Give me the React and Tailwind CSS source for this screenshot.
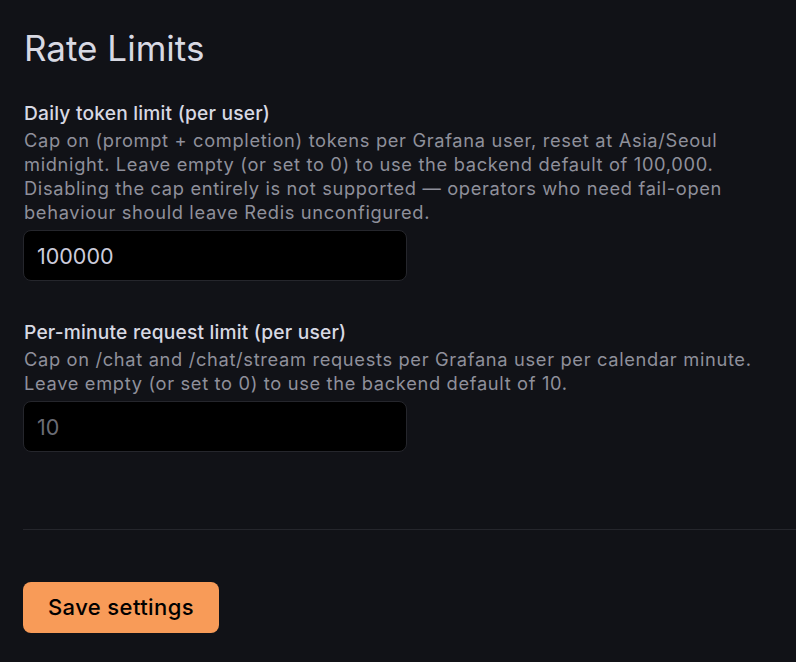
import { useState } from 'react';

function Field({ label, description, value, placeholder, onChange }) {
	return (
		<div className="flex flex-col">
			<label className="pl-px text-[19.2px] leading-[30px] tracking-[0.2px] font-medium text-[#d8d9e3]">{label}</label>
			<p className="pl-px text-[18.3px] leading-[24px] tracking-[0.66px] text-[#8f909b]">{description}</p>
			<input
				type="text"
				value={value}
				placeholder={placeholder}
				onChange={(e) => onChange(e.target.value)}
				className="mt-[6px] w-[384px] h-[51px] rounded-[8px] bg-black border border-[#25262c] px-[13px] text-[21.5px] text-[#ccccdc] placeholder:text-[#6b6c75] outline-none"
			/>
		</div>
	);
}

export default function App() {
	const [dailyLimit, setDailyLimit] = useState('100000');
	const [minuteLimit, setMinuteLimit] = useState('');

	return (
		<div className="min-h-[662px] bg-[#111217] pl-[23px] pt-[24px] font-['Inter',sans-serif]">
			<h2 className="pl-px text-[35px] leading-[48px] font-normal text-[#d8d9e3]">Rate Limits</h2>

			<div className="mt-[26px] flex flex-col gap-[36px]">
				<Field
					label="Daily token limit (per user)"
					description="Cap on (prompt + completion) tokens per Grafana user, reset at Asia/Seoul midnight. Leave empty (or set to 0) to use the backend default of 100,000. Disabling the cap entirely is not supported — operators who need fail-open behaviour should leave Redis unconfigured."
					value={dailyLimit}
					onChange={setDailyLimit}
				/>
				<Field
					label="Per-minute request limit (per user)"
					description="Cap on /chat and /chat/stream requests per Grafana user per calendar minute. Leave empty (or set to 0) to use the backend default of 10."
					value={minuteLimit}
					placeholder="10"
					onChange={setMinuteLimit}
				/>
			</div>

			<div className="mt-[77px] border-t border-[#25262c]" />

			<div className="pt-[52px] pb-[29px]">
				<button className="h-[51px] px-[25px] rounded-[8px] bg-[#f89b58] text-[22px] tracking-[0.4px] font-medium text-black">
					Save settings
				</button>
			</div>
		</div>
	);
}
